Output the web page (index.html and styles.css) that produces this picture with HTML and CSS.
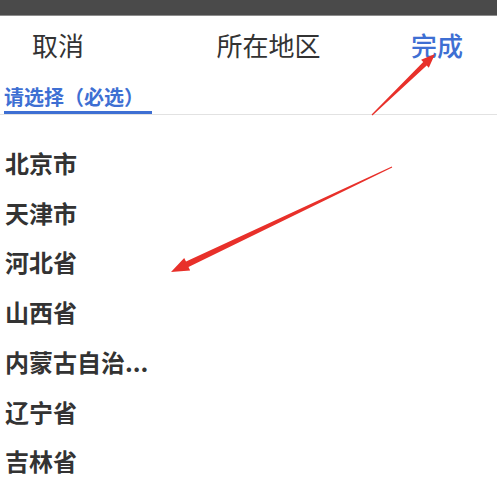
FILE: index.html
```html
<!DOCTYPE html>
<html lang="zh-CN">
<head>
  <meta charset="UTF-8">
  <meta name="viewport" content="width=device-width, initial-scale=1.0">
  <title>所在地区</title>
  <link rel="stylesheet" href="styles.css">
</head>
<body>
  <div class="statusbar"></div>

  <div class="toolbar">
    <span class="cancel">取消</span>
    <span class="title">所在地区</span>
    <span class="done">完成</span>
  </div>

  <div class="tabs">
    <span class="tab active">请选择（必选）</span>
  </div>

  <ul class="region-list">
    <li>北京市</li>
    <li>天津市</li>
    <li>河北省</li>
    <li>山西省</li>
    <li>内蒙古自治...</li>
    <li>辽宁省</li>
    <li>吉林省</li>
  </ul>

  <!-- annotation arrows drawn over the screenshot -->
  <svg class="marks" width="497" height="498" viewBox="0 0 497 498">
    <polygon fill="#e8302a" points="371.6,114.6 423.2,61.9 421.1,59.8 435,54 428.8,67.7 426.7,65.5 372.4,115.4" />
    <polygon fill="#e8302a" points="391.8,166.5 186,261.6 184.2,258 171,272 190.2,270.6 188.5,267 392.2,167.5" />
  </svg>
</body>
</html>
```

FILE: styles.css
```css
body {
  margin: 0;
  height: 498px;
  overflow: hidden;
  position: relative;
  background: #fff;
  font-family: "Noto Sans CJK SC", "Noto Sans", sans-serif;
  color: #333;
}

.statusbar {
  height: 15px;
  background-color: #4a4a4a;
  border-bottom: 1px solid #8c8c8c;
}

.toolbar {
  display: flex;
  align-items: center;
  height: 56px;
  padding: 0 34px 0 32px;
  font-size: 26px;
}

.toolbar .title {
  flex: 1;
  text-align: center;
  padding-left: 42px;
}

.toolbar .done {
  color: #3e6fd3;
  font-weight: 500;
}

.tabs {
  display: flex;
  align-items: flex-end;
  height: 42px;
  border-bottom: 1px solid #e2e2e2;
}

.tab {
  margin-left: 4px;
  padding-right: 8px;
  font-size: 20px;
  line-height: 28px;
  font-weight: bold;
  color: #3e6fd3;
  border-bottom: 3px solid #3e6fd3;
}

.region-list {
  list-style: none;
  margin: 0;
  padding: 23px 0 0 0;
}

.region-list li {
  padding-left: 5px;
  font-size: 24px;
  font-weight: bold;
  line-height: 49.7px;
  color: #333;
}

.marks {
  position: absolute;
  top: 0;
  left: 0;
  pointer-events: none;
}
```
